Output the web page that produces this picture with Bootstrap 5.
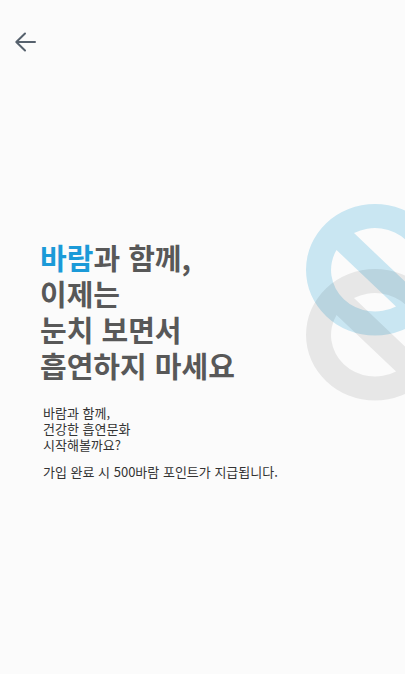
<!DOCTYPE html>
<html lang="ko">
<head>
<meta charset="utf-8">
<meta name="viewport" content="width=device-width, initial-scale=1">
<title>바람</title>
<link rel="stylesheet" href="https://cdn.jsdelivr.net/npm/bootstrap@5.3.0/dist/css/bootstrap.min.css">
<style>
body { background: #fbfbfb; color: #333; font-family: "Noto Sans CJK KR", sans-serif; }
.top-bar { padding: 30px 12px 0; }
.back-btn { line-height: 0; }
.intro { padding: 185px 0 24px 40px; }
.intro-title { color: #585858; font-size: 29px; line-height: 36px; font-weight: 700; }
.brand-word { color: #1b9ad8; }
.intro-text { padding: 22px 0 0 3px; font-size: 13px; line-height: 16px; }
.intro-note { margin-top: 11px; }
.rings { top: 150px; right: 0; }
</style>
</head>
<body class="min-vh-100 d-flex flex-column">
<header class="top-bar d-flex">
  <button type="button" class="btn back-btn border-0 p-0" aria-label="뒤로">
    <svg width="26" height="24" viewBox="0 0 26 24" fill="none" stroke="#56616d" stroke-width="2" stroke-linecap="round" stroke-linejoin="round" aria-hidden="true"><path d="M23 12H4.500M13 3.500L4.300 12L13 20.500"/></svg>
  </button>
</header>
<main class="intro flex-grow-1 position-relative overflow-hidden">
  <svg class="rings position-absolute" width="99" height="197" viewBox="0 0 99 197" aria-hidden="true">
    <defs>
      <path id="ring" fill-rule="evenodd" d="M0 65.800A69 65.800 0 1 1 138 65.800A69 65.800 0 1 1 0 65.800ZM30.500 46A44 41.500 0 0 0 90 102.500ZM48 29.100L107.500 85.600A44 41.500 0 0 0 48 29.100Z"/>
    </defs>
    <use href="#ring" fill="#c9e6f2"/>
    <use href="#ring" y="65" fill="#000" fill-opacity=".08"/>
  </svg>
  <h1 class="intro-title position-relative mb-0"><span class="brand-word">바람</span>과 함께,<br>이제는<br>눈치 보면서<br>흡연하지 마세요</h1>
  <div class="intro-text position-relative">
    <p class="mb-0">바람과 함께,<br>건강한 흡연문화<br>시작해볼까요?</p>
    <p class="intro-note mb-0">가입 완료 시 500바람 포인트가 지급됩니다.</p>
  </div>
</main>
<script src="https://cdn.jsdelivr.net/npm/bootstrap@5.3.0/dist/js/bootstrap.bundle.min.js"></script>
</body>
</html>
